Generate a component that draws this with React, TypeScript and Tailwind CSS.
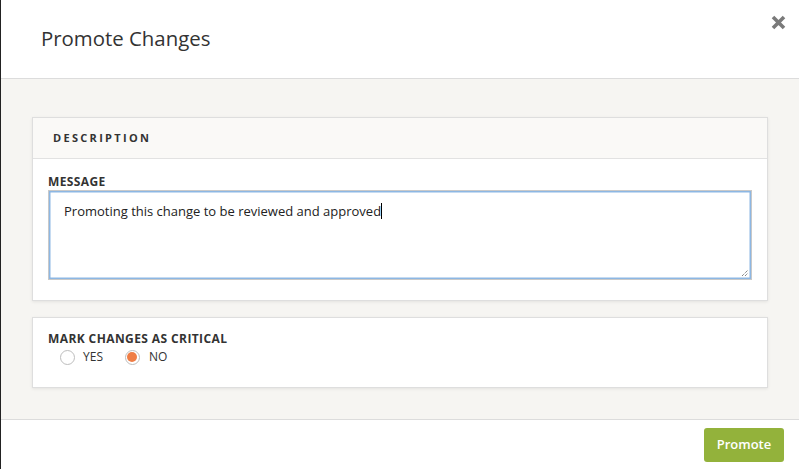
export default function App() {
  return (
    <div
      className="w-[799px] h-[469px] flex flex-col border-l border-[#222] bg-white text-[#333] overflow-hidden"
      style={{ fontFamily: '"Open Sans", "Liberation Sans", sans-serif' }}
    >
      {/* Header */}
      <div className="h-[79px] shrink-0 flex items-start justify-between border-b border-[#dcdcdc] relative">
        <h1 className="pl-10 pt-[24px] text-[20.4px] leading-[28px] font-normal text-[#333]">Promote Changes</h1>
        <button className="absolute right-[13px] top-[15px] w-[15px] h-[15px]" aria-label="Close">
          <svg viewBox="0 0 15 15" className="w-[15px] h-[15px]">
            <path d="M2 2 L13 13 M13 2 L2 13" stroke="#7a7a7a" strokeWidth="3.6" strokeLinecap="butt" />
          </svg>
        </button>
      </div>

      {/* Body */}
      <div className="flex-1 bg-[#f6f5f2] px-[31px] pt-[38px] pb-[31px] flex flex-col gap-[16px]">
        <div className="bg-white border border-[#dedede] shadow-[0_1px_3px_rgba(0,0,0,0.08)]">
          <div className="h-[41px] bg-[#faf9f7] border-b border-[#e2e2e2] flex items-center pl-[20px]">
            <span className="text-[11px] font-bold tracking-[2.3px] text-[#333]">DESCRIPTION</span>
          </div>
          <div className="px-[15px] pt-[15px] pb-[20px]">
            <div className="text-[12px] font-bold leading-[16px] tracking-[0.4px] text-[#333]">MESSAGE</div>
            <div className="relative h-[90px] border border-[#c9c9c9] shadow-[inset_0_0_0_1.5px_#8db7e3] px-[15px] pt-[10px] text-[13px] leading-[20px] text-[#222]">
              Promoting this change to be reviewed and approved
              <span className="inline-block w-px h-[16px] bg-black align-[-3px]"></span>
              <svg viewBox="0 0 8 8" className="absolute right-[2px] bottom-[2px] w-[8px] h-[8px]">
                <path d="M1 7 L7 1 M4 7 L7 4" stroke="#555" strokeWidth="1" strokeDasharray="1 1" />
              </svg>
            </div>
          </div>
        </div>

        <div className="bg-white border border-[#dedede] shadow-[0_1px_3px_rgba(0,0,0,0.08)] px-[15px] pt-[13px] pb-[21px]">
          <div className="text-[12px] font-bold leading-[16px] tracking-[0.4px] text-[#333]">MARK CHANGES AS CRITICAL</div>
          <div className="flex items-center pl-[12px] pt-[1px] text-[12px] leading-[18px] text-[#333]">
            <label className="flex items-center gap-[8px] mr-[22px]">
              <span className="w-[15px] h-[15px] rounded-full border border-[#bdbdbd] bg-white"></span>
              YES
            </label>
            <label className="flex items-center gap-[9px]">
              <span className="w-[15px] h-[15px] rounded-full border border-[#bdbdbd] bg-white flex items-center justify-center">
                <span className="w-[10px] h-[10px] rounded-full bg-[#ef7d45]"></span>
              </span>
              NO
            </label>
          </div>
        </div>
      </div>

      {/* Footer */}
      <div className="h-[50px] shrink-0 border-t border-[#dcdcdc] flex items-start justify-end pr-[15px] pt-[8px]">
        <button className="w-[80px] h-[34px] rounded-[3px] bg-[#93b23b] text-white text-[13px] font-semibold">Promote</button>
      </div>
    </div>
  );
}
